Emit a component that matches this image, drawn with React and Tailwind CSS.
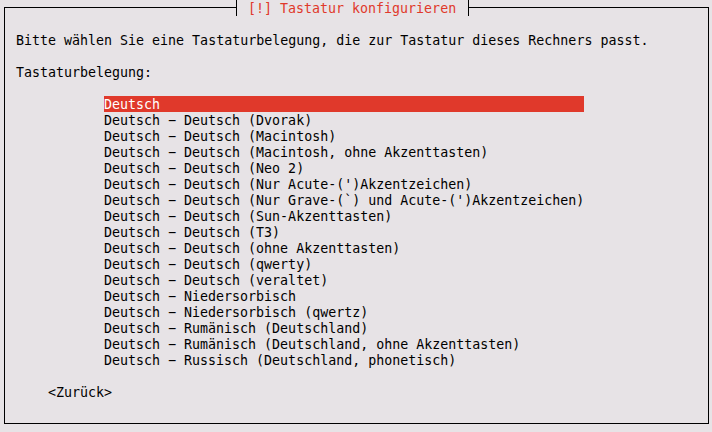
export default function App() {
  const items = [
    "Deutsch",
    "Deutsch − Deutsch (Dvorak)",
    "Deutsch − Deutsch (Macintosh)",
    "Deutsch − Deutsch (Macintosh, ohne Akzenttasten)",
    "Deutsch − Deutsch (Neo 2)",
    "Deutsch − Deutsch (Nur Acute-(')Akzentzeichen)",
    "Deutsch − Deutsch (Nur Grave-(`) und Acute-(')Akzentzeichen)",
    "Deutsch − Deutsch (Sun-Akzenttasten)",
    "Deutsch − Deutsch (T3)",
    "Deutsch − Deutsch (ohne Akzenttasten)",
    "Deutsch − Deutsch (qwerty)",
    "Deutsch − Deutsch (veraltet)",
    "Deutsch − Niedersorbisch",
    "Deutsch − Niedersorbisch (qwertz)",
    "Deutsch − Rumänisch (Deutschland)",
    "Deutsch − Rumänisch (Deutschland, ohne Akzenttasten)",
    "Deutsch − Russisch (Deutschland, phonetisch)",
  ];

  return (
    <div
      className="w-[712px] h-[432px] overflow-hidden bg-[#e7e3e6] text-black text-[13.3px] leading-[18px] pt-[7px] pl-[4px]"
      style={{ fontFamily: '"DejaVu Sans Mono", "Liberation Mono", monospace' }}
    >
      <div className="relative w-[705px] h-[417px] border border-black pl-[11px] pt-[24px]">
        {/* title sits over the top border */}
        <div className="absolute left-[231px] -top-[8px] w-[233px] h-[16px] border-l border-r border-black bg-[#e7e3e6] pl-[11px] text-[#e0392b] whitespace-pre">
          [!] Tastatur konfigurieren
        </div>

        <div className="whitespace-pre h-[16px]">Bitte wählen Sie eine Tastaturbelegung, die zur Tastatur dieses Rechners passt.</div>
        <div className="whitespace-pre h-[16px] mt-[16px]">Tastaturbelegung:</div>

        <div className="mt-[16px] pl-[88px] flex flex-col">
          {items.map((t, i) => (
            <div
              key={i}
              className={
                i === 0
                  ? "whitespace-pre h-[16px] w-[480px] bg-[#e0392b] text-white"
                  : "whitespace-pre h-[16px] w-[480px]"
              }
            >
              {t}
            </div>
          ))}
        </div>

        <div className="whitespace-pre h-[16px] mt-[16px] pl-[32px]">{"<Zurück>"}</div>
      </div>
    </div>
  );
}
